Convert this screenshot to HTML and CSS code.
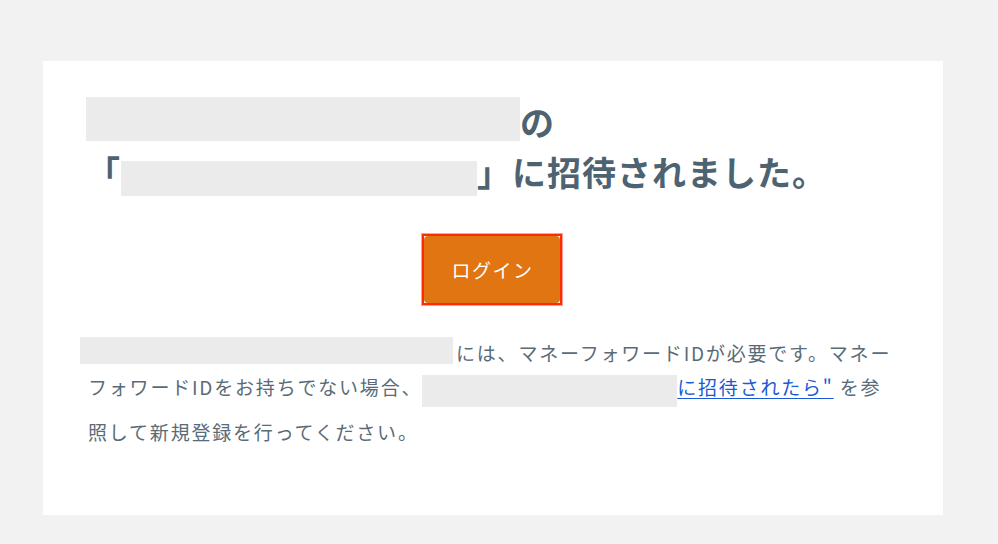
FILE: index.html
```html
<!DOCTYPE html>
<html lang="ja">
<head>
<meta charset="utf-8">
<title>招待</title>
<link rel="stylesheet" href="styles.css">
</head>
<body>
<main class="card">
  <h1 class="title"><span class="redact redact-a"></span>の<br>「<span class="redact redact-b"></span>」に招待されました。</h1>
  <div class="actions">
    <span class="focus-ring"><button class="btn" type="button">ログイン</button></span>
  </div>
  <p class="note"><span class="redact redact-c"></span>には、マネーフォワードIDが必要です。マネーフォワードIDをお持ちでない場合、<span class="redact redact-d"></span><a class="link" href="#">に招待されたら"</a> を参照して新規登録を行ってください。</p>
</main>
</body>
</html>
```
FILE: styles.css
```css
html, body {
  margin: 0;
  padding: 0;
}
body {
  background: #f2f2f2;
  width: 998px;
  height: 544px;
  padding: 61px 0 0 43px;
  box-sizing: border-box;
  font-family: "Noto Sans CJK JP", "Noto Sans", sans-serif;
}
.card {
  width: 900px;
  height: 454px;
  background: #ffffff;
  box-sizing: border-box;
  padding: 36px 46px 0 43px;
}
.title {
  margin: 0;
  font-size: 34px;
  line-height: 50px;
  font-weight: 700;
  letter-spacing: 1px;
  color: #4e6371;
}
.redact {
  display: inline-block;
  background: #ebebeb;
}
.redact-a {
  width: 434px;
  height: 44px;
  vertical-align: -5px;
}
.redact-b {
  width: 356px;
  height: 35px;
  vertical-align: -10px;
}
.actions {
  margin-top: 37px;
  display: flex;
  justify-content: center;
}
.focus-ring {
  display: inline-block;
  border: 2px solid #ff2a00;
  box-shadow: 0 0 0 1px rgba(255, 90, 60, 0.55);
  background: #ffffff;
  line-height: 0;
}
.btn {
  width: 136px;
  height: 67px;
  border: 0;
  margin: 0;
  padding: 0 0 0 2px;
  border-radius: 4px;
  background: #e07511;
  color: #ffffff;
  font-family: "Noto Sans CJK JP", "Noto Sans", sans-serif;
  font-size: 19px;
  letter-spacing: 1.5px;
  line-height: 1;
}
.note {
  margin: 31px 0 0 2px;
  font-size: 19px;
  line-height: 34px;
  letter-spacing: 1.8px;
  color: #5a6b78;
}
.redact-c {
  width: 373px;
  height: 27px;
  margin-left: -8px;
  margin-right: 3px;
  vertical-align: -3px;
}
.redact-d {
  width: 255px;
  height: 32px;
  vertical-align: -20px;
  margin-bottom: 8px;
}
.link {
  color: #1a5ad7;
  text-decoration: underline;
  text-underline-offset: 3px;
}
```
